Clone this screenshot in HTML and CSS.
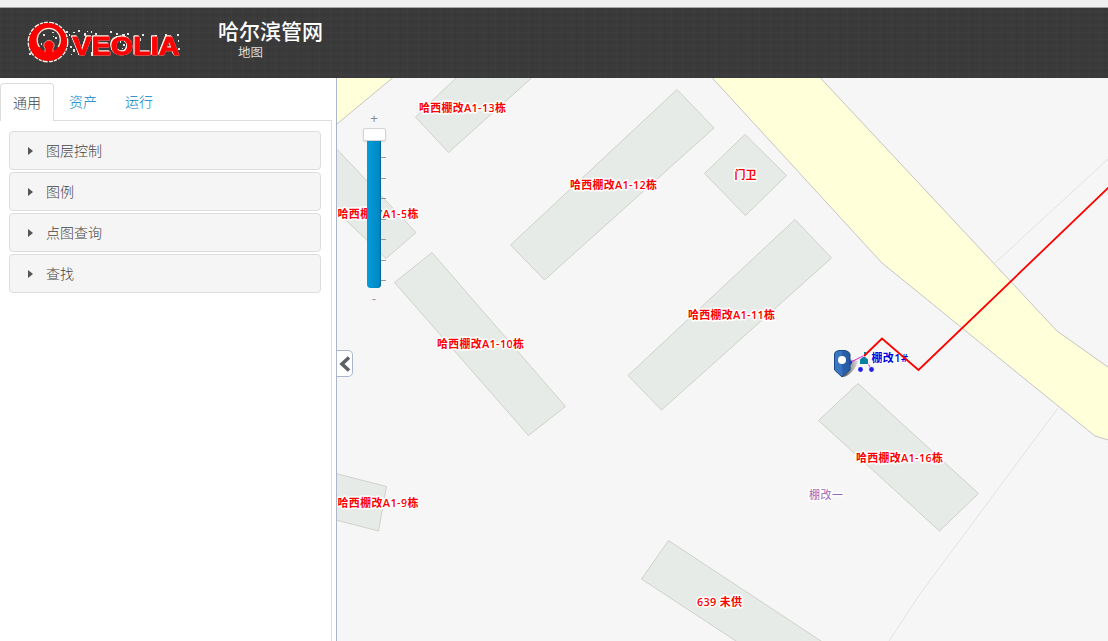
FILE: index.html
```html
<!DOCTYPE html>
<html lang="zh-CN">
<head>
<meta charset="utf-8">
<title>哈尔滨管网</title>
<link rel="stylesheet" href="styles.css">
</head>
<body>
<div class="app">
  <div class="chrome-strip"></div>
  <header class="header">
    <svg class="logo" width="160" height="50" viewBox="24 17 160 50" role="img" aria-label="Veolia">
      <path class="flecks" d="M66 31h2v2h-2zM29 53h2v2h-2zM70 46h2v2h-2zM71 54h1v1h-1zM73 32h2v1h-2zM78 30h2v2h-2zM84 33h2v3h-2zM91 31h1v2h-1zM95 33h2v2h-2zM110 31h2v2h-2zM116 33h2v2h-2zM122 34h3v2h-3zM127 33h2v2h-2zM142 34h2v2h-2zM155 35h2v2h-2zM165 34h2v2h-2zM177 34h2v2h-2zM178 40h1v2h-1zM178 48h2v2h-2zM73 49h2v3h-2zM91 52h2v4h-2zM78 53h2v2h-2zM95 37h2v4h-2zM117 49h2v3h-2zM139 38h2v3h-2zM136 50h2v2h-2zM104 38h2v1h-2zM69 34h1v2h-1zM87 31h1v1h-1z"/>
      <circle cx="48" cy="42" r="19.600" fill="none" stroke="#fff1e6" stroke-width="1.600" stroke-dasharray="5 1 3 1 4 1.500"/>
      <circle cx="48" cy="42" r="19" fill="#fe0000"/>
      <circle cx="48.800" cy="40" r="11.600" fill="#3c3b3b"/>
      <path d="M39.500 47A11.600 11.600 0 1 1 58 47" fill="none" stroke="#ffe9dc" stroke-width="1.200"/>
      <path class="flecks" d="M43 34h2v2h-2zM55 37h2v2h-2zM41 43h1v2h-1zM52 32h2v1h-2zM53 36h1v1h-1z"/>
      <path d="M45 54V48.500A5 5 0 1 1 53 48.500V54Z" fill="#fe0000" stroke="#ffc2b0" stroke-width=".7"/>
      <path d="M38 49.500Q49 56 60 49.500L57 57H41Z" fill="#fe0000"/>
      <text class="logo-text" x="72.500" y="54.500" textLength="107" lengthAdjust="spacingAndGlyphs">VEOLIA</text>
      <path class="flecks" d="M120 41h1v2h-1zM123 44h2v2h-2zM124 41h1v1h-1zM122 48h1v1h-1z"/>
    </svg>
    <div class="titles">
      <h1 class="title">哈尔滨管网</h1>
      <div class="subtitle">地图</div>
    </div>
  </header>
  <main class="main">
    <aside class="sidebar">
      <nav class="tabs">
        <a class="tab active">通用</a>
        <a class="tab">资产</a>
        <a class="tab">运行</a>
      </nav>
      <div class="panels">
        <div class="panel"><span class="caret"></span>图层控制</div>
        <div class="panel"><span class="caret"></span>图例</div>
        <div class="panel"><span class="caret"></span>点图查询</div>
        <div class="panel"><span class="caret"></span>查找</div>
      </div>
    </aside>
    <section class="map">
      <svg class="map-canvas" width="771" height="563" viewBox="337 78 771 563">
        <g class="road">
          <path d="M330 70H402L337 124H330Z"/>
          <path d="M705 70L882 263L1095 436L1115 442V372L1057 331L813 70Z"/>
        </g>
        <path class="lane" d="M995 263L1108 159M1058 408L920 594L889 641"/>
        <g class="building">
          <path d="M460 74L415.500 117L448.500 152.500L536 74Z"/>
          <path d="M677 89.500L714 128L544.500 280L510.500 245Z"/>
          <path d="M745 134.500L786.500 175.500L745.500 215.500L704.500 173.500Z"/>
          <path d="M795 219.500L831.500 258L661.500 410L628 375.500Z"/>
          <path d="M330 142L416 232.500L386 258.500L330 205Z"/>
          <path d="M432 252.500L565.500 406.500L528.500 435.500L394.500 282.500Z"/>
          <path d="M330 472L386.500 486.500L378.500 531L330 518.500Z"/>
          <path d="M858 383.500L978.500 493.500L939.500 531L818.500 420.500Z"/>
          <path d="M668.500 540.500L827 645H742L641.500 579Z"/>
        </g>
        <g class="label">
          <text x="419" y="112" textLength="87">哈西棚改A1-13栋</text>
          <text x="570" y="189" textLength="87">哈西棚改A1-12栋</text>
          <text x="734.500" y="179" textLength="22">门卫</text>
          <text x="688" y="319" textLength="87">哈西棚改A1-11栋</text>
          <text x="337.500" y="218" textLength="81">哈西棚改A1-5栋</text>
          <text x="437" y="348" textLength="87">哈西棚改A1-10栋</text>
          <text x="337.500" y="507" textLength="81">哈西棚改A1-9栋</text>
          <text x="856" y="462" textLength="87">哈西棚改A1-16栋</text>
          <text x="697" y="606" textLength="45">639 未供</text>
        </g>
        <text class="label-area" x="809" y="499" textLength="34">棚改一</text>
        <defs>
          <linearGradient id="shade"><stop offset="0" stop-color="#555"/><stop offset="1" stop-color="#ddd"/></linearGradient>
          <linearGradient id="pin"><stop offset="0" stop-color="#3d78c4"/><stop offset=".48" stop-color="#3873c0"/><stop offset=".52" stop-color="#2a62ae"/><stop offset="1" stop-color="#245a9f"/></linearGradient>
        </defs>
        <path d="M843 377C849 377 857 367 858 361L848 359Z" fill="url(#shade)"/>
        <path d="M850 362.500L863 356M868.500 364.500L870 367" fill="none" stroke="#e020e0"/>
        <circle class="node" cx="850" cy="362.500" r="2"/>
        <circle class="node" cx="860.500" cy="369.500" r="2.400"/>
        <circle class="node" cx="871.500" cy="369.500" r="2.400"/>
        <text class="label-site" x="871.500" y="362" textLength="36.500">棚改1#</text>
        <path d="M864 352h2v4h-2zM860 359.500L863 357H865L868 359.500V364H860Z" fill="#0880a0"/>
        <path class="pipe" d="M864 356L882 338.500L918.500 370L1110 186"/>
        <path d="M834.500 353.500Q835 351 839 350.500H845Q849 351 850 354V370L842 377L834.500 370Z" fill="url(#pin)" stroke="#1b4985"/>
        <circle cx="842" cy="360" r="4" fill="#fff"/>
      </svg>
      <div class="zoom">
        <div class="zoom-sign">+</div>
        <div class="thumb"></div>
        <div class="track-row">
          <div class="track"></div>
          <div class="ticks"><i></i><i></i><i></i><i></i><i></i><i></i><i></i></div>
        </div>
        <div class="zoom-sign minus">-</div>
      </div>
      <div class="collapse">
        <svg width="13" height="16" viewBox="0 0 13 16"><path d="M11 1.500L4 8L11 14.500" fill="none" stroke="#5e6165" stroke-width="3.600"/></svg>
      </div>
    </section>
  </main>
</div>
</body>
</html>
```

FILE: styles.css
```css
* { box-sizing: border-box; }
body {
  margin: 0;
  font-family: "Noto Sans CJK SC", "Liberation Sans", sans-serif;
  font-size: 14px;
  color: #555;
  background: #fff;
}
.app { display: flex; flex-direction: column; height: 641px; overflow: hidden; }
.chrome-strip { flex: none; height: 8px; background: #f0f0f0; border-bottom: 1px solid #a8a8a8; }
.header {
  flex: none;
  display: flex;
  height: 70px;
  padding: 9px 0 0 24px;
  background-color: #3b3a3a;
  background-image:
    repeating-linear-gradient(90deg, rgba(255,255,255,.015) 0 1px, transparent 1px 4px, rgba(0,0,0,.04) 4px 5px, transparent 5px 11px),
    repeating-linear-gradient(0deg, rgba(0,0,0,.04) 0 1px, transparent 1px 3px, rgba(255,255,255,.015) 3px 4px, transparent 4px 7px);
}
.logo { display: block; flex: none; }
.logo-text {
  font: bold 26px "Liberation Sans", sans-serif;
  fill: #fe0000;
  stroke: #fe0000;
  stroke-width: 1px;
  stroke-linejoin: round;
  filter: drop-shadow(.7px .7px 0 #fff0e8) drop-shadow(-.7px -.5px 0 #fff0e8);
}
.flecks { fill: #e6e6e6; }
.titles { padding: 0 0 0 34px; color: #fff; }
.title { margin: 0; font-size: 21px; line-height: 26px; font-weight: 500; }
.subtitle { padding: 2px 0 0 20px; font-size: 12.5px; line-height: 14px; color: #ddd; }
.main { flex: 1; display: flex; min-height: 0; }
.sidebar { flex: none; width: 337px; border-right: 1px solid #adb6c8; padding-right: 4px; display: flex; flex-direction: column; }
.tabs { display: flex; gap: 2px; height: 43px; padding-top: 5px; border-bottom: 1px solid #ddd; }
.tab { height: 38px; width: 54px; padding-left: 13px; line-height: 37px; font-size: 14px; font-weight: 300; color: #0080c0; }
.tab.active { padding-left: 12px; line-height: 36px; color: #444; background: #fff; border: 1px solid #ddd; border-bottom: 0; border-radius: 4px 4px 0 0; }
.panels { flex: 1; display: flex; flex-direction: column; gap: 2px; padding: 10px 10px 0 9px; border-right: 1px solid #ddd; }
.panel { display: flex; align-items: center; height: 39px; padding: 0 0 2px 18px; background: #f5f5f5; border: 1px solid #ddd; border-radius: 4px; font-weight: 300; color: #444; }
.caret { width: 5px; height: 8px; margin: 2px 13px 0 0; border: solid transparent; border-width: 4px 0 4px 5px; border-left-color: #555; }
.map { position: relative; width: 771px; background: #f6f6f6; overflow: hidden; }
.map-canvas { display: block; }
.road { fill: #ffffd9; stroke: #c4c4c4; }
.lane { fill: none; stroke: #e2e2e2; }
.building { fill: #e7ebe8; stroke: #c8c8c0; stroke-width: .8px; }
.label text, .label-site, .label-area {
  font-family: "Open Sans", "Noto Sans CJK SC", sans-serif;
  font-size: 11px;
  stroke: #fff;
  stroke-width: 3px;
  stroke-linejoin: round;
  paint-order: stroke;
}
.label text { font-weight: 600; fill: #fa0000; }
.label-site { font-weight: 600; fill: #0000e0; }
.label-area { fill: #9a66b8; }
.node { fill: #2020e8; }
.pipe { fill: none; stroke: #f00; stroke-width: 1.8px; }
.zoom { position: absolute; left: 25px; top: 31px; width: 24px; display: flex; flex-direction: column; align-items: center; }
.zoom-sign { height: 19px; font: 13px/19px "Liberation Sans", sans-serif; color: #888; }
.thumb { width: 23px; height: 13px; background: #fff; border: 1px solid #d4d4d4; border-radius: 2px; box-shadow: 0 1px 2px rgba(0,0,0,.12); }
.track-row { display: flex; align-self: stretch; padding-left: 5px; }
.track { width: 14px; height: 147px; border-radius: 0 0 4px 4px; background: linear-gradient(90deg, #049cdb, #0086c0); box-shadow: inset -1px 0 1px #00689b; }
.ticks { display: flex; flex-direction: column; gap: 19.5px; padding-top: 16px; }
.ticks i { width: 5px; height: 1px; background: #999; }
.minus { padding-top: 1px; color: #a89890; }
.collapse { position: absolute; left: 0; top: 272px; width: 16px; height: 27px; display: flex; align-items: center; padding-left: 1px; background: #fff; border: 1px solid #adb6c8; border-left: 0; border-radius: 0 5px 5px 0; }
```
